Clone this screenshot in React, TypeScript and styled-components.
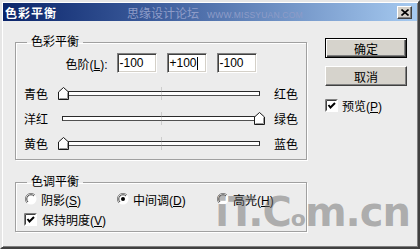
import styled, { createGlobalStyle } from "styled-components";

const GlobalStyle = createGlobalStyle`
  html, body { margin: 0; padding: 0; }
  body {
    font-family: "Liberation Sans", "Noto Sans CJK SC", sans-serif;
    font-size: 12px;
    color: #000;
  }
`;

const Window = styled.div`
  position: relative;
  box-sizing: border-box;
  width: 420px;
  height: 249px;
  padding: 1px;
  background: #ececec;
  border: 2px solid;
  border-color: #e6e6e6 #404040 #404040 #e6e6e6;
  box-shadow: inset 1px 1px 0 #fff, inset -1px -1px 0 #808080;
  display: flex;
  flex-direction: column;
  overflow: hidden;
`;

const TitleBar = styled.div`
  height: 18px;
  display: flex;
  align-items: center;
  padding: 0 5px 0 2px;
  background: linear-gradient(90deg, #0a246a 0%, #3a5a9a 35%, #a6caf0 100%);
`;

const Title = styled.span`
  color: #fff;
  font-weight: bold;
  font-size: 12px;
  letter-spacing: 1px;
`;

const TitleMark = styled.span`
  margin-left: 70px;
  color: #8e9cc8;
  font-size: 12px;
  display: flex;
  align-items: baseline;
  gap: 8px;
`;

const TitleMarkUrl = styled.span`
  font-size: 8.5px;
  letter-spacing: 0.2px;
`;

const CloseButton = styled.div`
  margin-left: auto;
  box-sizing: border-box;
  width: 15px;
  height: 13px;
  background: #d4d0c8;
  border: 1px solid;
  border-color: #fff #404040 #404040 #fff;
  box-shadow: inset -1px -1px 0 #808080;
  display: flex;
  align-items: center;
  justify-content: center;
`;

const Body = styled.div`
  flex: 1;
  display: flex;
  padding: 14px 0 0 12px;
`;

const LeftCol = styled.div`
  width: 292px;
  display: flex;
  flex-direction: column;
  gap: 15px;
`;

const Group = styled.fieldset<{ $pb: number }>`
  margin: 0;
  padding: 0 0 ${(p) => p.$pb}px;
  min-width: 0;
  border: 1px solid #a0a0a0;
  box-shadow: 1px 1px 0 #fff, inset 1px 1px 0 #fff;
`;

const Legend = styled.legend`
  margin-left: 11px;
  padding: 0 4px;
  font-size: 12px;
  line-height: 14px;
`;

const LevelsRow = styled.div`
  margin-top: 4px;
  display: flex;
  justify-content: center;
  align-items: center;
  gap: 10px;
`;

const LevelsLabel = styled.span`
  margin-right: -1px;
`;

const Field = styled.div`
  box-sizing: border-box;
  width: 40px;
  height: 20px;
  padding: 0 2px;
  background: #fff;
  border: 1px solid;
  border-color: #808080 #fff #fff #808080;
  box-shadow: inset 1px 1px 0 #404040, inset -1px -1px 0 #d4d0c8;
  line-height: 18px;
  font-size: 12px;
  display: flex;
  align-items: center;
`;

const Caret = styled.span`
  display: inline-block;
  width: 1px;
  height: 13px;
  background: #000;
`;

const Sliders = styled.div`
  margin-top: 8px;
  display: flex;
  flex-direction: column;
`;

const SliderRow = styled.div`
  height: 25px;
  padding-left: 8px;
  display: flex;
  align-items: center;
  gap: 14px;
`;

const SideLabel = styled.span`
  width: 24px;
  white-space: nowrap;
`;

const Track = styled.div`
  position: relative;
  box-sizing: border-box;
  width: 198px;
  height: 5px;
  background: #fff;
  border: 1px solid #2a2a2a;
  border-bottom-color: #505050;

  &::after {
    content: "";
    position: absolute;
    left: 98px;
    top: -5px;
    width: 1px;
    height: 13px;
    background: rgba(150, 150, 150, 0.35);
  }
`;

const Thumb = styled.svg`
  position: absolute;
  top: -5px;
  z-index: 1;
`;

const RadioRow = styled.div`
  height: 20px;
  padding-left: 9px;
  display: grid;
  grid-template-columns: 92px 100px auto;
  align-items: center;
`;

const Option = styled.label<{ $gap: number }>`
  display: flex;
  align-items: center;
  gap: ${(p) => p.$gap}px;
  white-space: nowrap;
`;

const CheckRow = styled.div`
  height: 20px;
  padding-left: 8px;
  display: flex;
  align-items: center;
`;

const RightCol = styled.div`
  margin-left: 18px;
  padding-top: 3px;
  display: flex;
  flex-direction: column;
  gap: 8px;
`;

const Button = styled.div<{ $default?: boolean }>`
  box-sizing: border-box;
  width: 82px;
  height: 20px;
  background: #d6d3cc;
  border: 1px solid;
  border-color: ${(p) => (p.$default ? "#000" : "#fff #404040 #404040 #fff")};
  box-shadow: ${(p) =>
    p.$default
      ? "inset 1px 1px 0 #fff, inset -1px -1px 0 #404040, inset -2px -2px 0 #808080"
      : "inset -1px -1px 0 #808080"};
  display: flex;
  align-items: center;
  justify-content: center;
  font-size: 12px;
`;

const PreviewRow = styled.div`
  margin-top: 3px;
`;

const BigMark = styled.div`
  position: absolute;
  right: 8px;
  bottom: 8px;
  font-family: "DejaVu Sans", sans-serif;
  font-weight: bold;
  font-size: 40px;
  line-height: 40px;
  letter-spacing: -1px;
  color: rgba(110, 110, 110, 0.5);
  pointer-events: none;
  white-space: nowrap;
`;

const SmallO = styled.span`
  font-size: 22px;
  letter-spacing: -1px;
`;

function ThumbIcon({ pos }: { pos: number }) {
  return (
    <Thumb width="11" height="13" viewBox="0 0 11 13" style={{ left: pos * 196 - 5 }}>
      <path d="M0.5 12.5 V5 L5.5 0.5 L10.5 5 V12.5 Z" fill="#fff" stroke="#1a1a1a" />
      <path d="M1.5 11.5 H9.5 V5.5" fill="none" stroke="#9a9a9a" />
    </Thumb>
  );
}

function Radio({ checked }: { checked?: boolean }) {
  return (
    <svg width="12" height="12" viewBox="0 0 12 12">
      <circle cx="6" cy="6" r="5.5" fill="#fff" />
      <path d="M10 2 A5.5 5.5 0 0 0 2 10" fill="none" stroke="#808080" />
      <path d="M9 3 A4.2 4.2 0 0 0 3 9" fill="none" stroke="#404040" />
      {checked && <circle cx="6" cy="6" r="2" fill="#000" />}
    </svg>
  );
}

function CheckBox() {
  return (
    <svg width="13" height="13" viewBox="0 0 13 13">
      <rect x="0" y="0" width="13" height="13" fill="#fff" />
      <path d="M0.5 12.5 V0.5 H12.5" fill="none" stroke="#808080" />
      <path d="M1.5 11.5 V1.5 H11.5" fill="none" stroke="#404040" />
      <path d="M3.5 6 L5.5 8.5 L10 4" fill="none" stroke="#000" strokeWidth="2" />
    </svg>
  );
}

const sliders = [
  { left: "青色", right: "红色", value: -100 },
  { left: "洋红", right: "绿色", value: 100 },
  { left: "黄色", right: "蓝色", value: -100 },
];

export default function App() {
  return (
    <>
      <GlobalStyle />
      <Window>
        <TitleBar>
          <Title>色彩平衡</Title>
          <TitleMark>
            思缘设计论坛
            <TitleMarkUrl>WWW.MISSYUAN.COM</TitleMarkUrl>
          </TitleMark>
          <CloseButton>
            <svg width="8" height="7" viewBox="0 0 8 7">
              <path d="M0.5 0.5 L7.5 6.5 M7.5 0.5 L0.5 6.5" stroke="#000" strokeWidth="1.6" />
            </svg>
          </CloseButton>
        </TitleBar>
        <Body>
          <LeftCol>
            <Group $pb={3}>
              <Legend>色彩平衡</Legend>
              <LevelsRow>
                <LevelsLabel>
                  色阶(<u>L</u>):
                </LevelsLabel>
                <Field>-100</Field>
                <Field>
                  +100
                  <Caret />
                </Field>
                <Field>-100</Field>
              </LevelsRow>
              <Sliders>
                {sliders.map((s) => (
                  <SliderRow key={s.left}>
                    <SideLabel>{s.left}</SideLabel>
                    <Track>
                      <ThumbIcon pos={(s.value + 100) / 200} />
                    </Track>
                    <SideLabel>{s.right}</SideLabel>
                  </SliderRow>
                ))}
              </Sliders>
            </Group>
            <Group $pb={2}>
              <Legend>色调平衡</Legend>
              <RadioRow>
                <Option $gap={4}>
                  <Radio />
                  <span>
                    阴影(<u>S</u>)
                  </span>
                </Option>
                <Option $gap={4}>
                  <Radio checked />
                  <span>
                    中间调(<u>D</u>)
                  </span>
                </Option>
                <Option $gap={4}>
                  <Radio />
                  <span>
                    高光(<u>H</u>)
                  </span>
                </Option>
              </RadioRow>
              <CheckRow>
                <Option $gap={5}>
                  <CheckBox />
                  <span>
                    保持明度(<u>V</u>)
                  </span>
                </Option>
              </CheckRow>
            </Group>
          </LeftCol>
          <RightCol>
            <Button $default>确定</Button>
            <Button>取消</Button>
            <PreviewRow>
              <Option $gap={4}>
                <CheckBox />
                <span>
                  预览(<u>P</u>)
                </span>
              </Option>
            </PreviewRow>
          </RightCol>
        </Body>
        <BigMark>
          iT.C<SmallO>o</SmallO>m.cn
        </BigMark>
      </Window>
    </>
  );
}
